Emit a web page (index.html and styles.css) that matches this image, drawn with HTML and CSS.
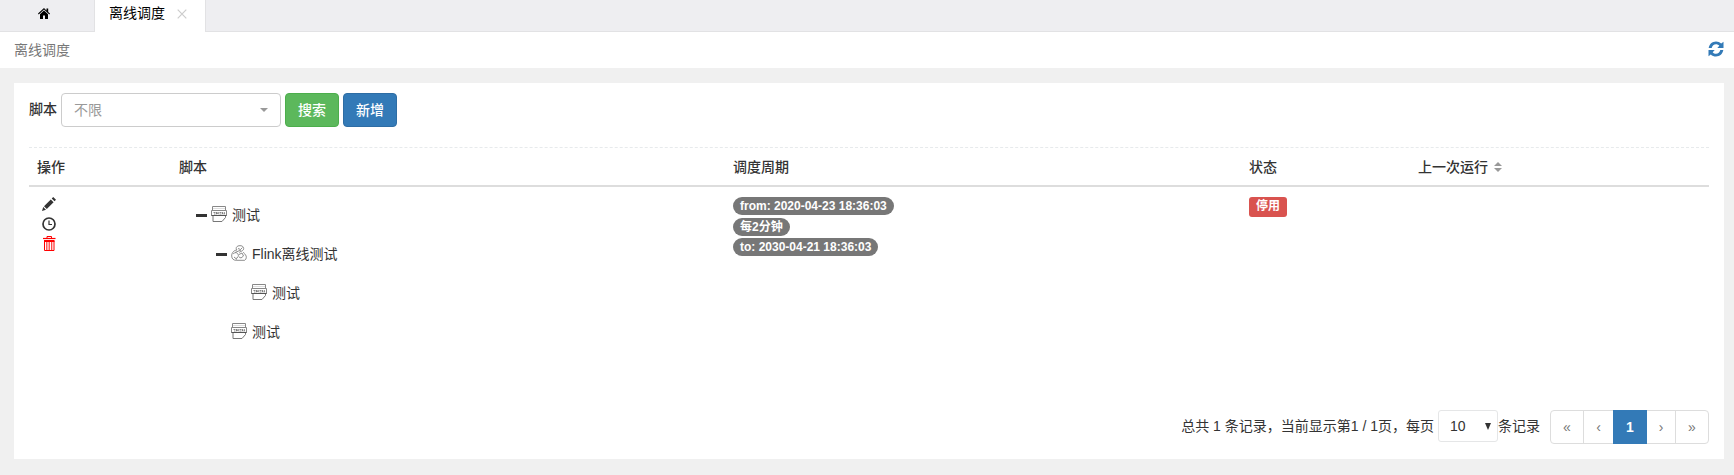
FILE: index.html
```html
<!DOCTYPE html>
<html lang="zh-CN">
<head>
<meta charset="utf-8">
<title>离线调度</title>
<link rel="stylesheet" href="styles.css">
</head>
<body>
<svg class="sprite" aria-hidden="true">
  <symbol id="shell" viewBox="0 0 16 16">
    <path d="M1.500 4.500v-4h13v4M.5 4.500v5h15v-5z" fill="none" stroke="#888"/>
    <path d="M2 2.500h12" stroke="#ddd"/>
    <path d="M2 9.500v6h9l3.500-4v-2" fill="none" stroke="#777"/>
    <path d="M.5 9.500h15" stroke="#555"/>
    <path d="M2.500 6.500h2M3 8h1.500M5.500 6v2.300M7.200 6v2.300M5.500 7.200h1.700M8.500 6.500h2M8.500 8h2M11.500 6v2h1M13.300 6v2h.8" stroke="#555" stroke-width=".7" fill="none"/>
  </symbol>
  <symbol id="flink" viewBox="0 0 16 16">
    <path d="M6 5C4 3 6 .5 9 .7c3-.2 4.500 2.300 3.200 4.300-1.200 1.500-3 1.300-4 2.500M6 5C3 5 .5 8 .7 11c0 3 2 4.300 4.500 4.300h8.500c2-1.200 2-4 .8-5.500-1-1.300-2-1.500-2-2.800M2 9c2-2 4-1.500 5 0s0 4-2 4.500M7 3.500l2.500 1 2-2M4 7.500l6-2.500M8 9.500l3-1.500 1.500 3-2.500 2-2-1M3 12l3 2.500" fill="none" stroke="#808080" stroke-width=".9"/>
  </symbol>
</svg>
<nav class="tabs">
  <a class="tab tab-home"><svg width="12" height="11" viewBox="0 0 12 11"><path d="M6 0 0 5.600l.7.800L6 1.500l5.300 4.900.7-.8L10.200 4V.6H8.500v1.800zM6 2.600 2 6.300V11h3V7.500h2V11h3V6.300z"/></svg></a>
  <a class="tab tab-active"><span>离线调度</span><svg width="10" height="10" viewBox="0 0 10 10"><path d="M.7.7l8.600 8.600M9.300.7.7 9.300" stroke="#ccc" stroke-width="1.200"/></svg></a>
  <div class="tab-rest"></div>
</nav>
<header class="crumb">
  <span>离线调度</span>
  <svg width="16" height="16" viewBox="0 0 16 16" fill="#337ab7"><path d="M.7 7C1.200 3.300 4.200.5 8 .5c2 0 3.800.8 5.200 2.100L15.500.7V7H9.300l2-2.300C10.400 3.700 9.300 3.200 8 3.200 5.900 3.200 4.200 4.800 3.700 7zM15.300 9c-.5 3.700-3.500 6.500-7.300 6.500-2 0-3.800-.8-5.200-2.100L.5 15.300V9h6.200l-2 2.300c.9 1 2 1.500 3.300 1.500 2.100 0 3.800-1.600 4.300-3.800z"/></svg>
</header>
<main class="panel">
  <div class="filters">
    <label>脚本</label>
    <div class="picker"><span>不限</span><i class="caret"></i></div>
    <button class="btn btn-search">搜索</button>
    <button class="btn btn-add">新增</button>
  </div>
  <div class="grid head">
    <div>操作</div><div>脚本</div><div>调度周期</div><div>状态</div>
    <div class="sortable">上一次运行<svg width="8" height="10" viewBox="0 0 8 10" fill="#999"><path d="M0 4 4 0l4 4zM0 6h8l-4 4z"/></svg></div>
  </div>
  <div class="grid row">
    <div class="actions">
      <svg width="14" height="14" viewBox="0 0 14 14" fill="#333"><path d="M0 14l1.200-4 2.800 2.800zM2 9.200l6.800-6.800 2.800 2.800L4.800 12zM9.700 1.500 11.200 0 14 2.800l-1.500 1.500z"/></svg>
      <svg width="14" height="14" viewBox="0 0 14 14" fill="none" stroke="#333"><circle cx="7" cy="7" r="6" stroke-width="1.700"/><path d="M7 3.500v4h3" stroke-width="1.200"/></svg>
      <svg width="14" height="15" viewBox="0 0 14 15" fill="none" stroke="red"><path d="M5 2V.5h4.500V2" /><path d="M1 2.500h12.500" stroke-width="1.200"/><path d="M2 5h10.500" stroke-width="2"/><path d="M2.500 5v9.500h9.500V5"/><path d="M4.800 5v9M7.200 5v9M9.700 5v9" stroke-width="1.200" opacity=".8"/></svg>
    </div>
    <div class="tree">
      <div class="node"><i class="minus"></i><svg class="kind"><use href="#shell"/></svg>测试</div>
      <div class="node level-2"><i class="minus"></i><svg class="kind"><use href="#flink"/></svg>Flink离线测试</div>
      <div class="node level-3"><svg class="kind"><use href="#shell"/></svg>测试</div>
      <div class="node level-2 leaf"><svg class="kind"><use href="#shell"/></svg>测试</div>
    </div>
    <div class="period">
      <span class="badge">from: 2020-04-23 18:36:03</span>
      <span class="badge badge-mid">每2分钟</span>
      <span class="badge">to: 2030-04-21 18:36:03</span>
    </div>
    <div><span class="state">停用</span></div>
    <div></div>
  </div>
  <footer class="pager">
    <span>总共 1 条记录，当前显示第1 / 1页，每页</span>
    <div class="size"><span>10</span><svg width="6" height="7" viewBox="0 0 6 7"><path d="M0 0h6L3 7z" fill="#333"/></svg></div>
    <span>条记录</span>
    <div class="pages"><a class="wide">«</a><a class="prev">‹</a><a class="current">1</a><a>›</a><a class="last">»</a></div>
  </footer>
</main>
</body>
</html>
```
FILE: styles.css
```css
* { box-sizing: border-box; }
body { margin: 0; height: 475px; overflow: hidden; background: #f0f0f0; color: #333; font: 14px/20px "Liberation Sans", "Noto Sans CJK SC", sans-serif; }
svg { display: block; flex: none; }
.sprite { width: 0; height: 0; position: absolute; }
.tabs { display: flex; height: 32px; background: #eeeef1; color: #000; }
.tab { display: flex; height: 32px; }
.tab-home { width: 95px; padding: 8px 0 0 38px; border-right: 1px solid #e2e2e4; border-bottom: 1px solid #e2e2e4; }
.tab-active { width: 110px; background: #fff; padding: 3px 0 0 14px; gap: 12px; }
.tab-active svg { margin-top: 6px; }
.tab-rest { flex: 1; border-left: 1px solid #e2e2e4; border-bottom: 1px solid #e2e2e4; }
.crumb { display: flex; justify-content: space-between; height: 36px; padding: 8px 10px 0 14px; background: #fff; color: #777; }
.crumb span { line-height: 20px; }
.crumb svg { margin-top: 1px; }
.panel { display: flex; flex-direction: column; width: 1710px; height: 376px; margin: 15px 0 0 14px; padding: 10px 15px 15px; background: #fff; }
.filters { display: flex; height: 54px; gap: 4px; }
.filters label { font-weight: 500; line-height: 32px; }
.picker { display: flex; justify-content: space-between; align-items: center; width: 220px; height: 34px; padding: 0 12px; border: 1px solid #ccc; border-radius: 4px; color: #999; }
.caret { border: 4px solid transparent; border-top-color: #999; border-bottom: 0; }
.btn { width: 54px; height: 34px; padding: 0; border: 1px solid; border-radius: 4px; color: #fff; font: 500 14px/30px "Liberation Sans", "Noto Sans CJK SC", sans-serif; }
.btn-search { background: #5cb85c; border-color: #4cae4c; }
.btn-add { background: #337ab7; border-color: #2e6da4; }
.grid { display: grid; grid-template-columns: 142px 554px 516px 169px 299px; }
.grid > div { padding-left: 8px; }
.head { height: 40px; border-top: 1px dashed #e7eaec; border-bottom: 2px solid #ddd; font-weight: 500; line-height: 38px; }
.sortable { display: flex; align-items: center; gap: 6px; }
.row { height: 213px; padding-top: 10px; }
.actions { display: flex; flex-direction: column; gap: 6px; }
.actions svg { margin-left: 5px; }
.actions svg:last-child { margin-top: -1px; }
.tree { display: flex; flex-direction: column; padding-top: 8px; }
.node { display: flex; align-items: center; height: 20px; margin: 0 0 19px 17px; }
.level-2 { margin-left: 37px; }
.level-3 { margin-left: 72px; }
.leaf { margin-left: 52px; }
.minus { width: 11px; height: 3px; margin-right: 4px; background: #333; }
.kind { width: 16px; height: 16px; margin: -2px 5px 0 0; }
.period { display: flex; flex-direction: column; align-items: flex-start; }
.badge { height: 18px; padding: 0 7px; border-radius: 9px; background: #777; color: #fff; font-size: 12px; font-weight: 700; line-height: 18px; white-space: nowrap; }
.badge-mid { margin: 3px 0 2px; }
.state { display: block; width: 38px; height: 20px; border-radius: 3px; background: #d9534f; color: #fff; font-size: 12px; font-weight: 700; line-height: 18px; text-align: center; }
.pager { display: flex; justify-content: flex-end; margin-top: 10px; line-height: 32px; }
.size { display: flex; justify-content: space-between; align-items: center; width: 60px; height: 32px; margin-left: 4px; padding: 0 6px 0 11px; border: 1px solid #e5e6e7; border-radius: 3px; }
.pages { display: flex; width: 159px; height: 34px; margin-left: 10px; border: 1px solid #ddd; border-radius: 4px; color: #777; }
.pages a { flex: 0 0 29px; border-right: 1px solid #ddd; text-align: center; }
.pages .wide { flex-basis: 33px; }
.pages .prev { flex-basis: 30px; }
.pages .last { flex-basis: 32px; border: 0; }
.pages .current { flex-basis: 34px; height: 34px; margin: -1px 0 0 -1px; border: 0; background: #337ab7; color: #fff; font-weight: 700; line-height: 34px; }
```
